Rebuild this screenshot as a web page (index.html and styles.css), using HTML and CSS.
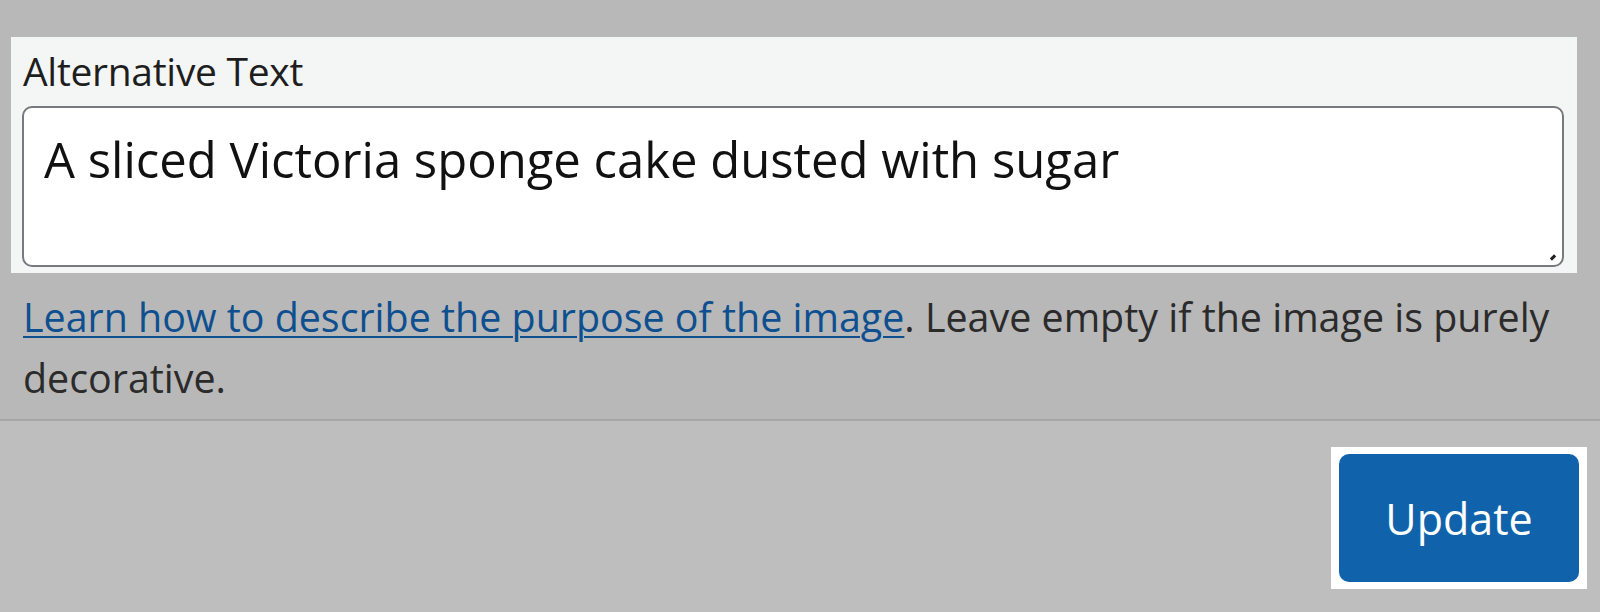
FILE: index.html
```html
<!DOCTYPE html>
<html lang="en">
<head>
<meta charset="utf-8">
<title>Alternative Text</title>
<link rel="stylesheet" href="styles.css">
</head>
<body>
<div class="page">
  <section class="top">
    <div class="panel">
      <label class="label" for="alt">Alternative Text</label>
      <div class="field">
        <div id="alt" class="textarea">A sliced Victoria sponge cake dusted with sugar</div>
        <span class="grip"></span>
      </div>
    </div>
    <p class="help"><a class="link" href="#">Learn how to describe the purpose of the image</a>. Leave empty if the image is purely decorative.</p>
  </section>
  <footer class="bottom">
    <div class="btn-wrap"><button class="btn" type="button">Update</button></div>
  </footer>
</div>
</body>
</html>
```
FILE: styles.css
```css
html, body {
  margin: 0;
  padding: 0;
}
body {
  width: 1600px;
  height: 612px;
  overflow: hidden;
  background: #bebebe;
  font-family: "Open Sans", "Noto Sans", sans-serif;
}
.page {
  display: flex;
  flex-direction: column;
  height: 612px;
}
.top {
  background: #b8b8b8;
  padding: 37px 23px 0 11px;
  height: 382px;
  border-bottom: 2px solid #a6a6a6;
}
.panel {
  background: #f4f6f5;
  width: 1566px;
  height: 236px;
  box-sizing: border-box;
  padding: 10px 13px 6px 11px;
  display: flex;
  flex-direction: column;
}
.label {
  font-size: 39px;
  line-height: 48px;
  letter-spacing: -0.3px;
  color: #1e1e1e;
  padding-left: 1px;
}
.field {
  position: relative;
  margin-top: 11px;
  flex: 1;
}
.textarea {
  box-sizing: border-box;
  height: 100%;
  border: 2px solid #76797e;
  border-radius: 10px;
  background: #fff;
  padding: 21px 20px 10px;
  font-size: 49px;
  line-height: 60px;
  color: #111;
}
.grip {
  position: absolute;
  right: 8px;
  bottom: 8px;
  width: 6px;
  height: 3px;
  background: #222;
  transform: rotate(-45deg);
}
.help {
  margin: 14px 0 0 12px;
  font-size: 39.4px;
  line-height: 61px;
  color: #2b2b2b;
}
.link {
  color: #0e4f8f;
  text-decoration: underline;
  text-decoration-thickness: 2px;
  text-underline-offset: 4px;
}
.bottom {
  flex: 1;
  display: flex;
  justify-content: flex-end;
  align-items: flex-start;
  padding: 26px 13px 0 0;
}
.btn-wrap {
  background: #fff;
  padding: 7px 8px 7px 8px;
}
.btn {
  display: block;
  width: 240px;
  height: 128px;
  border: 0;
  border-radius: 10px;
  background: #1063ab;
  color: #fff;
  font-family: "Open Sans", "Noto Sans", sans-serif;
  font-size: 43px;
  padding: 0;
}
```
